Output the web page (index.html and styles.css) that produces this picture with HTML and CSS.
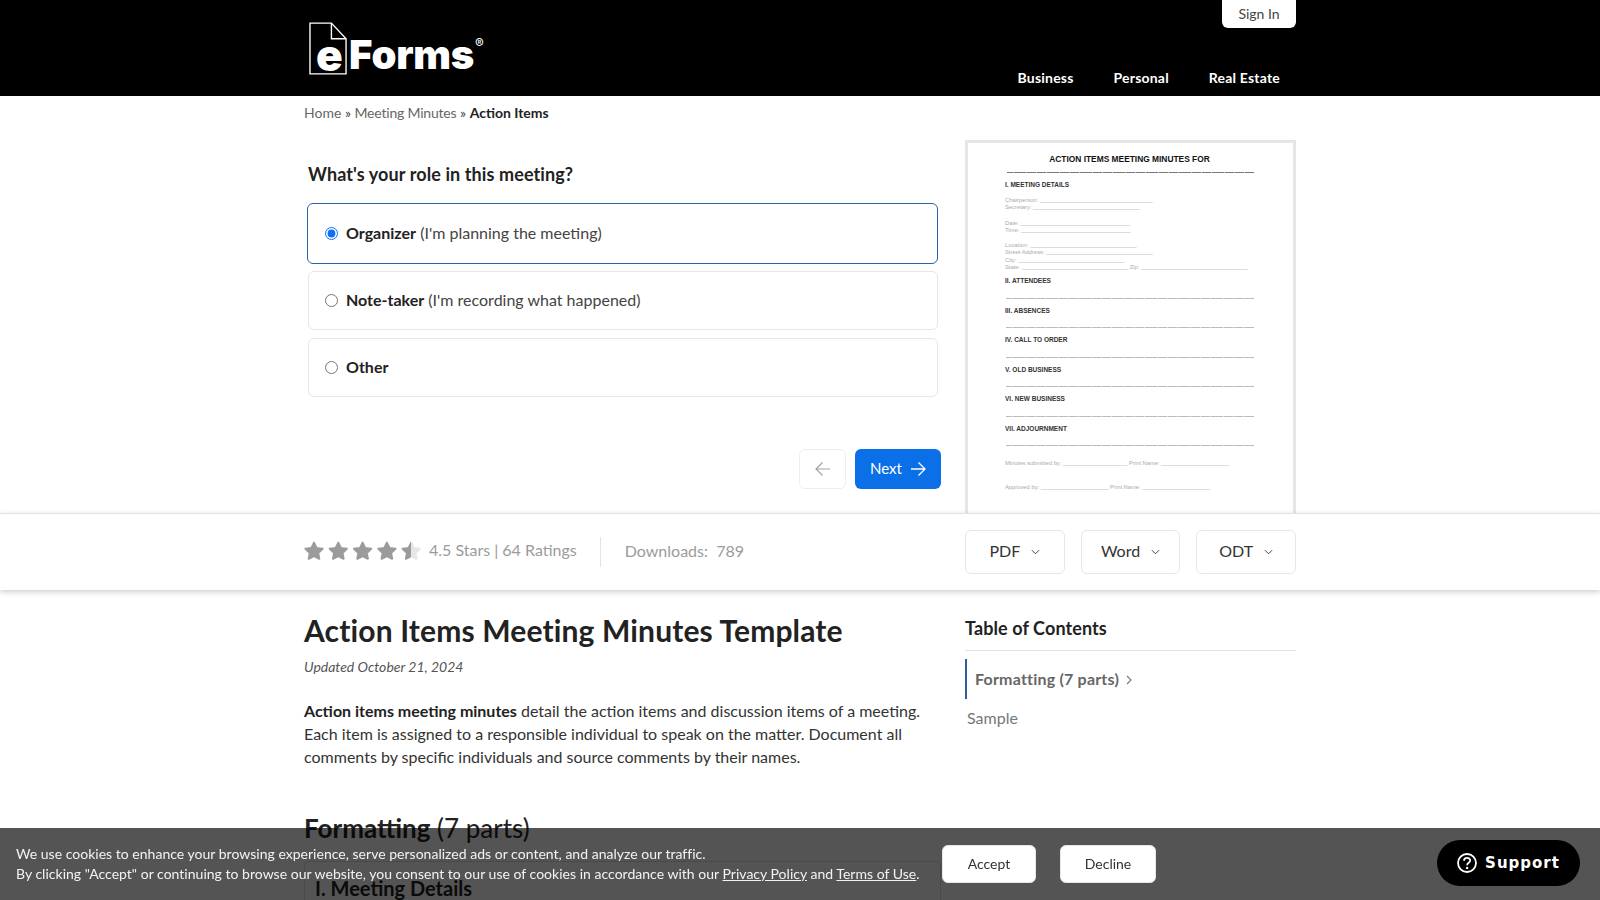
FILE: index.html
```html
<!DOCTYPE html>
<html lang="en">
<head>
    <meta charset="UTF-8">
    <meta name="viewport" content="width=device-width, initial-scale=1.0">
    <title>Action Items Meeting Minutes Template - eForms</title>
    <link rel="stylesheet" href="styles.css">
</head>
<body>
<div class="page">
    <!-- Header -->
    <div class="header">
        <div class="wrap header-inner">
            <a class="logo" href="#">
                <svg class="logo-doc" viewBox="0 0 40 54" xmlns="http://www.w3.org/2000/svg">
                    <path d="M1 1 H23 L38 17 V53 H1 Z" fill="#000" stroke="#fff" stroke-width="1.4"/>
                    <path d="M23 1 V17 H38" fill="none" stroke="#fff" stroke-width="1.4"/>
                </svg>
                <span class="logo-e">e</span>
                <span class="logo-forms">Forms</span>
                <span class="logo-reg">®</span>
            </a>
            <div class="header-right">
                <a class="signin" href="#">Sign In</a>
                <div class="nav">
                    <a href="#">Business</a>
                    <a href="#">Personal</a>
                    <a href="#">Real Estate</a>
                </div>
            </div>
        </div>
    </div>

    <!-- Form + preview -->
    <div class="wrap top-grid">
        <div class="top-left">
            <div class="breadcrumb">
                <a href="#">Home</a> <span class="sep">»</span> <a class="crumb-mid" href="#">Meeting Minutes</a> <span class="sep">»</span> <b>Action Items</b>
            </div>
            <div class="question">
                <h3>What's your role in this meeting?</h3>
                <label class="option selected">
                    <input type="radio" name="role" checked>
                    <span><b>Organizer</b> (I'm planning the meeting)</span>
                </label>
                <label class="option">
                    <input type="radio" name="role">
                    <span><b>Note-taker</b> (I'm recording what happened)</span>
                </label>
                <label class="option">
                    <input type="radio" name="role">
                    <span><b>Other</b></span>
                </label>
            </div>
            <div class="form-nav">
                <button class="btn-back" aria-label="Back">
                    <svg viewBox="0 0 16 16" width="16" height="16"><path d="M15 8 H1 M7.5 1.5 L1 8 L7.5 14.5" fill="none" stroke="#a3a3a3" stroke-width="1.2"/></svg>
                </button>
                <button class="btn-next"><span>Next</span>
                    <svg viewBox="0 0 16 16" width="16" height="16"><path d="M1 8 H15 M8.5 1.5 L15 8 L8.5 14.5" fill="none" stroke="#fff" stroke-width="1.3"/></svg>
                </button>
            </div>
        </div>
        <div class="preview">
            <div class="doc-title">ACTION ITEMS MEETING MINUTES FOR</div>
            <div class="doc-rule first"></div>
            <div class="doc-head h1">I. MEETING DETAILS</div>
            <p class="gap-a">Chairperson: ___________________________________</p>
            <p>Secretary: _________________________________</p>
            <p class="gap-b">Date: __________________________________</p>
            <p>Time: __________________________________</p>
            <p class="gap-b">Location: _________________________________</p>
            <p>Street Address: _________________________________</p>
            <p>City: _________________________________</p>
            <p>State: _________________________________ Zip: _________________________________</p>
            <div class="doc-head h2">II. ATTENDEES</div>
            <div class="doc-rule"></div>
            <div class="doc-head">III. ABSENCES</div>
            <div class="doc-rule"></div>
            <div class="doc-head">IV. CALL TO ORDER</div>
            <div class="doc-rule"></div>
            <div class="doc-head">V. OLD BUSINESS</div>
            <div class="doc-rule"></div>
            <div class="doc-head">VI. NEW BUSINESS</div>
            <div class="doc-rule"></div>
            <div class="doc-head">VII. ADJOURNMENT</div>
            <div class="doc-rule"></div>
            <p class="gap-c">Minutes submitted by: ____________________ Print Name: _____________________</p>
            <p class="gap-d">Approved by: _____________________ Print Name: _____________________</p>
        </div>
    </div>

    <!-- Rating bar -->
    <div class="rating-bar">
        <div class="wrap top-grid-bar">
            <div class="rating">
                <svg class="stars" viewBox="0 0 118 20" width="118" height="20">
                    <defs>
                        <path id="star" d="M10 1.6 L12.6 7 L18.6 7.8 L14.2 11.9 L15.3 17.8 L10 15 L4.7 17.8 L5.8 11.9 L1.4 7.8 L7.4 7 Z" stroke-linejoin="round" stroke-width="2"/>
                        <linearGradient id="half"><stop offset="50%" stop-color="#9b9b9b"/><stop offset="50%" stop-color="#e6e6e6"/></linearGradient>
                    </defs>
                    <use href="#star" x="0" fill="#9b9b9b" stroke="#9b9b9b"/>
                    <use href="#star" x="24.3" fill="#9b9b9b" stroke="#9b9b9b"/>
                    <use href="#star" x="48.6" fill="#9b9b9b" stroke="#9b9b9b"/>
                    <use href="#star" x="72.9" fill="#9b9b9b" stroke="#9b9b9b"/>
                    <use href="#star" x="97.2" fill="url(#half)" stroke="url(#half)"/>
                </svg>
                <span class="rating-text">4.5 Stars | 64 Ratings</span>
                <span class="downloads">Downloads:&nbsp; 789</span>
            </div>
            <div class="formats">
                <button><span>PDF</span> <svg viewBox="0 0 10 6" width="9" height="6"><path d="M1 1 L5 5 L9 1" fill="none" stroke="#444" stroke-width="1.1"/></svg></button>
                <button><span>Word</span> <svg viewBox="0 0 10 6" width="9" height="6"><path d="M1 1 L5 5 L9 1" fill="none" stroke="#444" stroke-width="1.1"/></svg></button>
                <button><span>ODT</span> <svg viewBox="0 0 10 6" width="9" height="6"><path d="M1 1 L5 5 L9 1" fill="none" stroke="#444" stroke-width="1.1"/></svg></button>
            </div>
        </div>
    </div>

    <!-- Article -->
    <div class="wrap article-grid">
        <div class="article">
            <h1>Action Items Meeting Minutes Template</h1>
            <div class="updated">Updated October 21, 2024</div>
            <p><b>Action items meeting minutes</b> detail the action items and discussion items of a meeting. Each item is assigned to a responsible individual to speak on the matter. Document all comments by specific individuals and source comments by their names.</p>
            <h2><b>Formatting</b> (7 parts)</h2>
            <div class="part-box"><h4>I. Meeting Details</h4></div>
        </div>
        <div class="toc">
            <div class="toc-title">Table of Contents</div>
            <a class="toc-item active" href="#">Formatting (7 parts)
                <svg viewBox="0 0 6 10" width="6" height="10"><path d="M1 1 L5 5 L1 9" fill="none" stroke="#777" stroke-width="1.1"/></svg>
            </a>
            <a class="toc-item" href="#">Sample</a>
        </div>
    </div>
</div>

<!-- Cookie banner -->
<div class="cookie">
    <div class="cookie-text">
        We use cookies to enhance your browsing experience, serve personalized ads or content, and analyze our traffic.<br>
        By clicking "Accept" or continuing to browse our website, you consent to our use of cookies in accordance with our <a href="#">Privacy Policy</a> and <a href="#">Terms of Use</a>.
    </div>
    <button>Accept</button>
    <button>Decline</button>
</div>

<!-- Support -->
<a class="support" href="#">
    <svg viewBox="0 0 20 20" width="20" height="20"><circle cx="10" cy="10" r="9" fill="none" stroke="#fff" stroke-width="1.8"/><path d="M7 7.8 C7 3.9 13.2 4 13.2 7.6 C13.2 9.9 10.1 9.8 10.1 12.2" fill="none" stroke="#fff" stroke-width="1.8"/><circle cx="10.1" cy="15" r="1.2" fill="#fff"/></svg>
    Support
</a>
</body>
</html>
```

FILE: styles.css
```css
* { margin: 0; padding: 0; box-sizing: border-box; }
html, body { height: 100%; overflow: hidden; }
body { font-family: 'Lato', 'Liberation Sans', sans-serif; font-size: 16px; color: #222; background: #fff; }
a { color: inherit; text-decoration: none; }
button { font-family: inherit; cursor: pointer; }
.page { height: 100vh; overflow: hidden; }
.wrap { width: 992px; margin: 0 auto; }

/* Header */
.header { background: #000; height: 96px; }
.header-inner { display: flex; justify-content: space-between; height: 96px; }
.logo { position: relative; display: block; width: 190px; height: 96px; color: #fff; font-family: 'Inter', 'Lato', sans-serif; font-weight: 900; }
.logo-doc { position: absolute; left: 5px; top: 21px; width: 39px; height: 55px; }
.logo-e { position: absolute; left: 12px; top: 27px; font-size: 44px; line-height: 56px; }
.logo-forms { position: absolute; left: 45px; top: 27px; font-size: 40px; letter-spacing: -0.2px; line-height: 56px; }
.logo-reg { position: absolute; left: 171px; top: 35px; font-size: 13px; font-weight: 400; line-height: 16px; }
.header-right { display: flex; flex-direction: column; justify-content: space-between; align-items: flex-end; }
.signin { background: #fff; color: #444; font-size: 14px; width: 74px; height: 28px; line-height: 28px; text-align: center; border-radius: 0 0 6px 6px; }
.nav { display: flex; gap: 40px; padding: 0 16px 9px 0; color: #fff; font-size: 14px; font-weight: 700; letter-spacing: 0.2px; line-height: 18px; }

/* Form + preview */
.top-grid { display: grid; grid-template-columns: 637px 331px; gap: 24px; height: 417px; }
.breadcrumb { font-size: 14px; line-height: 18px; color: #666; padding-top: 8px; }
.breadcrumb .sep { color: #444; }
.breadcrumb .crumb-mid { letter-spacing: -0.2px; }
.breadcrumb b { color: #222; }
.question { padding: 0 3px 0 4px; margin-top: 40px; }
.question h3 { font-size: 18px; line-height: 24px; font-weight: 700; letter-spacing: 0.1px; margin-bottom: 17px; }
.option { display: flex; align-items: center; height: 59px; border: 1px solid #e6e6e6; border-radius: 6px; margin-bottom: 8px; padding-left: 16px; color: #444; cursor: pointer; }
.option b { color: #222; }
.option span { padding-bottom: 3px; }
.option.selected { height: 61px; margin-left: -1px; padding-left: 17px; border-color: #2a62a8; margin-bottom: 7px; }
.option input { width: 13px; height: 13px; margin: 0 8px 0 0; accent-color: #0d6efd; }
.form-nav { display: flex; justify-content: flex-end; gap: 9px; margin-top: 52px; }
.form-nav button { height: 40px; border-radius: 6px; display: flex; align-items: center; justify-content: center; }
.btn-back { width: 47px; background: #fff; border: 1px solid #eee; }
.btn-next { width: 86px; gap: 8px; background: #0b6fe8; border: none; color: #fff; font-size: 15px; }
.btn-next span { padding-bottom: 2px; }

/* Document preview, a scan of the template */
.preview { margin-top: 44px; height: 400px; border: 3px solid #e6e6e6; padding: 10px 39px 0 37px; font-family: 'Liberation Sans', sans-serif; color: #aaa; overflow: hidden; }
.preview p { font-size: 5.8px; line-height: 7.3px; white-space: nowrap; overflow: hidden; }
.doc-title { font-size: 8.4px; line-height: 12px; font-weight: 700; color: #111; text-align: center; }
.doc-rule { height: 1px; background: repeating-linear-gradient(90deg, #bbb 0 3px, #e4e4e4 3px 3.3px); margin: 12.5px 0 6px 1px; }
.doc-rule.first { background: repeating-linear-gradient(90deg, #777 0 3px, #ccc 3px 3.3px); margin: 7px 0 8px 2px; }
.doc-head { font-size: 6.5px; line-height: 8px; font-weight: 700; color: #333; margin-top: 8px; }
.doc-head.h1 { margin-top: 0; }
.doc-head.h2 { margin-top: 6px; }
.preview p.gap-a { margin-top: 8px; }
.preview p.gap-b { margin-top: 8px; }
.preview p.gap-c { margin-top: 14px; }
.preview p.gap-d { margin-top: 16px; }

/* Rating bar */
.rating-bar { position: relative; z-index: 2; height: 77px; background: #fff; border-top: 1px solid #e2e2e2; box-shadow: 0 2px 6px rgba(0, 0, 0, 0.2); }
.top-grid-bar { display: flex; justify-content: space-between; align-items: center; height: 76px; }
.rating { display: flex; align-items: center; color: #9b9b9b; }
.stars { margin-bottom: 2px; }
.rating-text { margin-left: 7px; padding-right: 23px; padding-bottom: 4px; line-height: 26px; border-right: 1px solid #e4e4e4; }
.downloads { margin-left: 24px; padding-bottom: 4px; }
.formats { display: flex; gap: 16px; }
.formats button { width: 99.67px; height: 44px; background: #fff; border: 1px solid #e6e6e6; border-radius: 6px; font-size: 16px; color: #333; display: flex; align-items: center; justify-content: center; gap: 11px; }
.formats button span { padding-bottom: 4px; }

/* Article */
.article-grid { display: grid; grid-template-columns: 637px 331px; gap: 24px; padding-top: 22px; }
.article h1 { font-size: 30px; line-height: 36px; font-weight: 700; letter-spacing: 0.15px; }
.updated { font-size: 14px; font-style: italic; color: #555; margin-top: 9px; line-height: 20px; }
.article p { line-height: 23px; margin-top: 22px; color: #333; }
.article p b { color: #222; }
.article h2 { font-size: 26px; line-height: 32px; font-weight: 400; margin-top: 44px; }
.part-box { border: 1px solid #ddd; border-radius: 4px 4px 0 0; margin-top: 17px; padding: 14px 10px; }
.part-box h4 { font-size: 20px; line-height: 24px; font-weight: 700; }
.toc-title { font-size: 18px; font-weight: 700; letter-spacing: 0.1px; line-height: 24px; padding: 4px 0 10px; border-bottom: 1px solid #e2e2e2; margin-bottom: 8px; }
.toc-item { display: block; color: #777; line-height: 37px; padding-left: 2px; }
.toc-item.active { color: #666; font-weight: 700; line-height: 40px; letter-spacing: 0.2px; padding-left: 8px; border-left: 2px solid #2d5f9e; }
.toc-item svg { margin-left: 3px; }

/* Cookie banner */
.cookie { position: fixed; left: 0; right: 0; bottom: 0; height: 72px; background: rgba(0, 0, 0, 0.67); color: #f2f2f2; display: flex; align-items: flex-start; padding: 16px 0 0 16px; }
.cookie-text { width: 926px; font-size: 14px; line-height: 20px; letter-spacing: 0.02px; }
.cookie-text a { text-decoration: underline; }
.cookie button { height: 38px; margin-top: 1px; padding-bottom: 1px; background: #fff; border: 1px solid #e6e6e6; border-radius: 6px; font-size: 14px; color: #333; }
.cookie button:nth-of-type(1) { width: 94px; margin-right: 24px; }
.cookie button:nth-of-type(2) { width: 96px; }

/* Support */
.support { position: fixed; right: 20px; bottom: 14px; width: 143px; height: 46px; background: #000; color: #fff; border-radius: 23px; display: flex; align-items: center; justify-content: center; gap: 8px; font-family: 'DejaVu Sans', sans-serif; font-weight: 700; font-size: 15px; letter-spacing: 1px; }
```
